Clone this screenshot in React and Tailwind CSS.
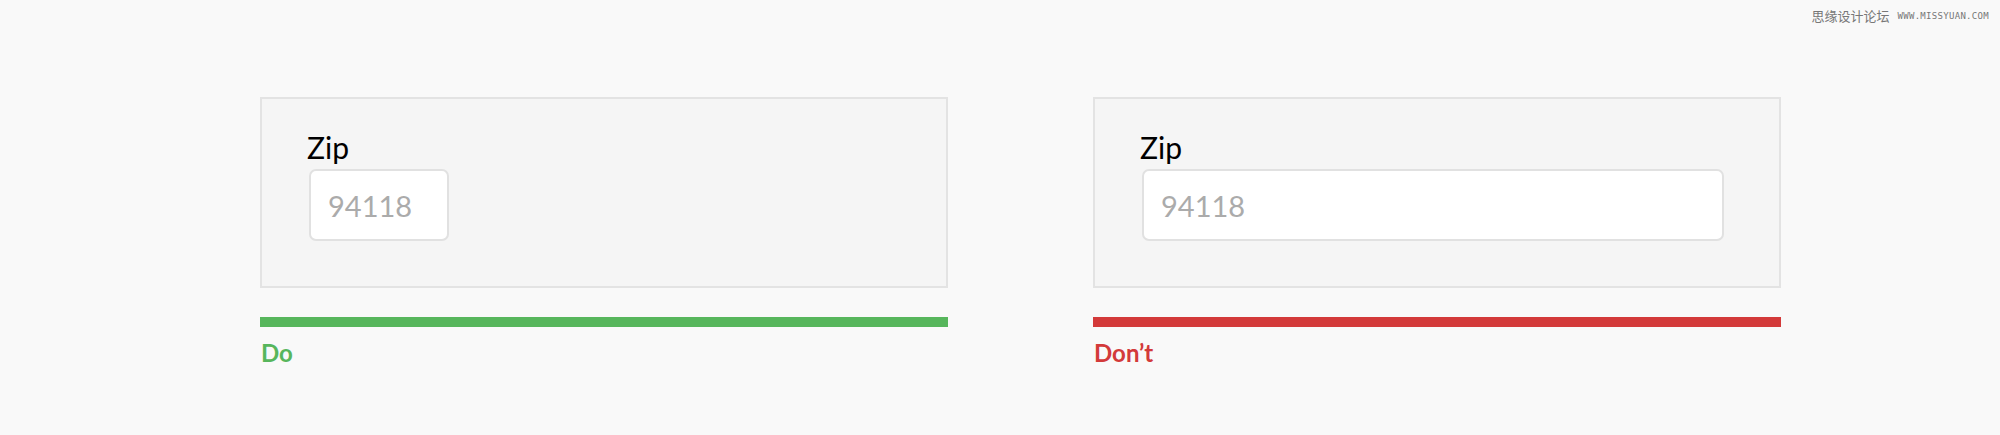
import React from 'react';

function Example({ inputWidth, barColor, labelColor, label }) {
  return (
    <div className="w-[688px] flex flex-col">
      <div className="h-[191px] bg-[#f5f5f5] border-2 border-[#e3e3e3] pl-[45px] pt-[30px]">
        <div className="text-[30px] leading-[36px] text-black">Zip</div>
        <div
          className={`${inputWidth} ml-[2px] mt-[4px] h-[72px] bg-white border-2 border-[#e1e1e1] rounded-[7px] flex items-center pl-[17px]`}
        >
          <span className="text-[29px] text-[#ababab] leading-none">94118</span>
        </div>
      </div>
      <div className={`mt-[29px] h-[10px] ${barColor}`} />
      <div className={`mt-[11px] text-[24px] leading-[30px] font-bold ${labelColor} pl-[1px]`}>{label}</div>
    </div>
  );
}

export default function App() {
  return (
    <div className="relative w-[2000px] h-[435px] bg-[#f9f9f9] font-['Lato','Liberation_Sans',sans-serif] overflow-hidden">
      <div className="absolute right-[11px] top-[8px] flex items-center gap-[8px] text-[#777]">
        <span className="text-[13px] leading-[15px] font-['Noto_Sans_CJK_SC',sans-serif]">思缘设计论坛</span>
        <span className="text-[9px] leading-[12px] tracking-[0.3px] font-['DejaVu_Sans_Mono',monospace]">WWW.MISSYUAN.COM</span>
      </div>
      <div className="flex gap-[145px] pl-[260px] pt-[97px]">
        <Example inputWidth="w-[140px]" barColor="bg-[#57b65c]" labelColor="text-[#57b65c]" label="Do" />
        <Example inputWidth="w-[582px]" barColor="bg-[#d33a3a]" labelColor="text-[#d33a3a]" label="Don’t" />
      </div>
    </div>
  );
}
